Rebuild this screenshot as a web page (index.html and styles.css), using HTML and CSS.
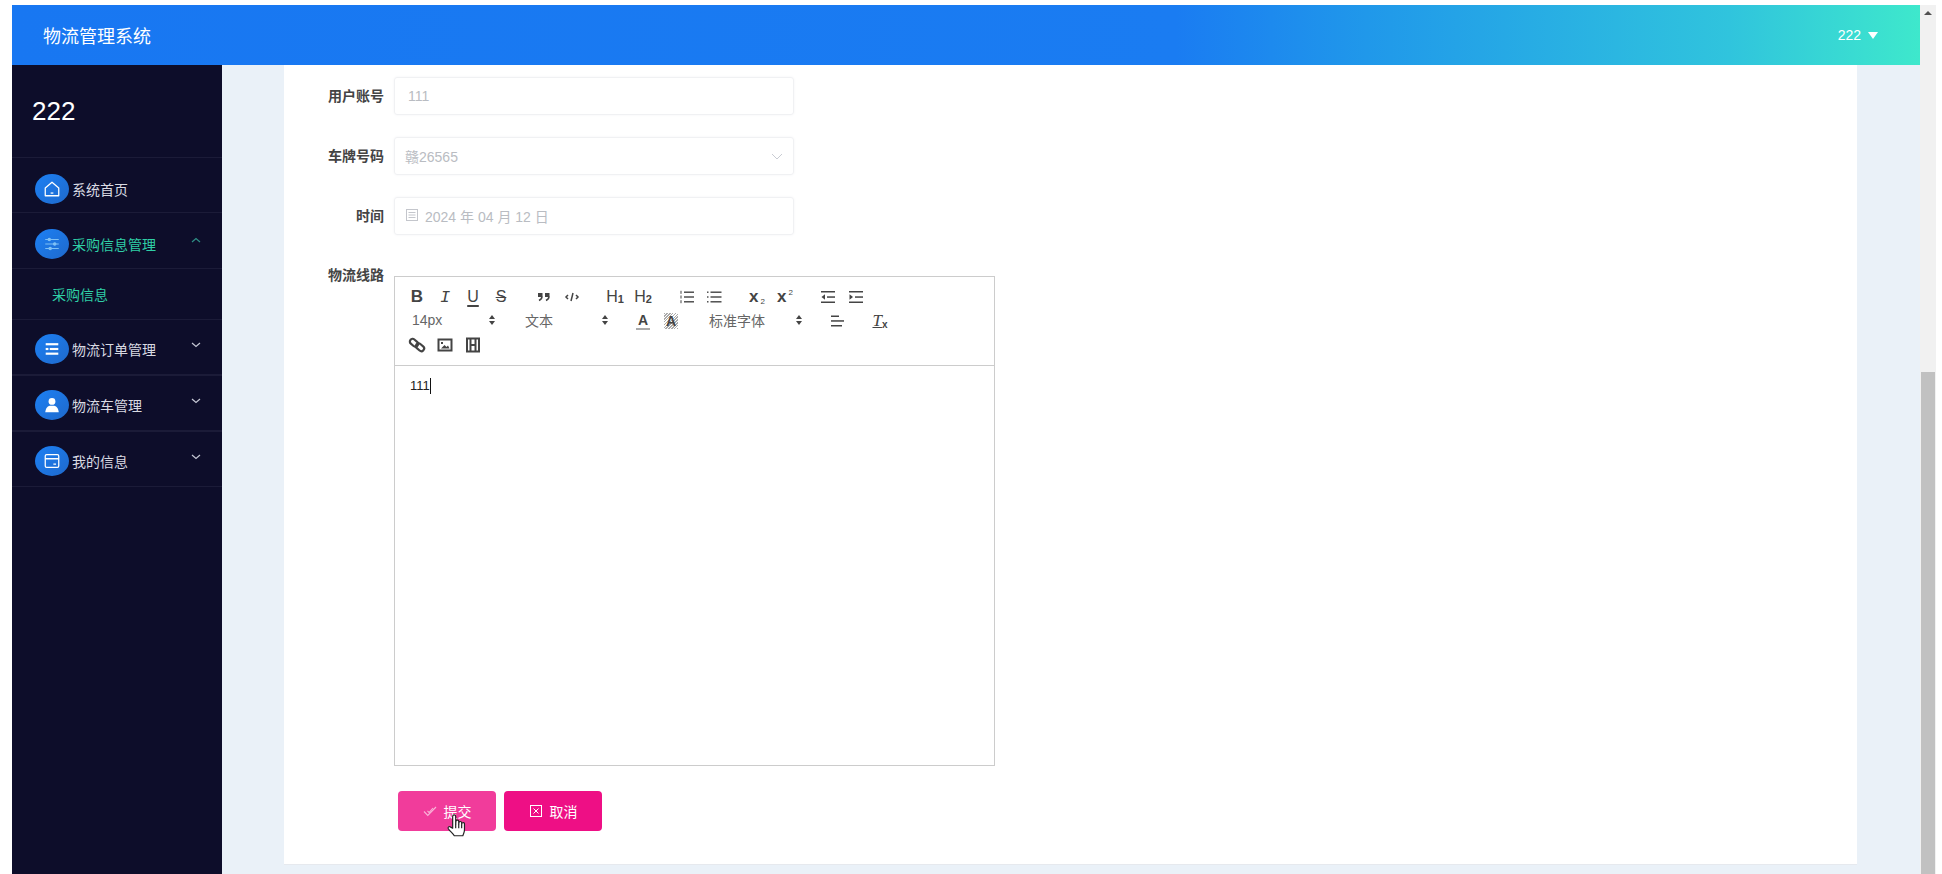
FILE: index.html
```html
<!DOCTYPE html>
<html lang="zh-CN">

<head>
    <meta charset="UTF-8">
    <title>物流管理系统</title>
    <link rel="stylesheet" href="styles.css">
</head>

<body>
    <div class="app">
        <div class="page">
            <header class="topbar">
                <span class="brand">物流管理系统</span>
                <span class="user">222 <i class="user-arrow"></i></span>
            </header>

            <div class="body-row">
                <aside class="sidebar">
                    <div class="side-user">222</div>

                    <div class="menu-item">
                        <span class="menu-icon">
                            <svg viewBox="0 0 20 20" fill="none" stroke="#fff" stroke-width="1.4">
                                <path d="M2.5 9 10 2.5 17.5 9v8.5h-15z" stroke-linejoin="round" />
                                <path d="M8.5 14.5h3" />
                            </svg>
                        </span>
                        <span class="menu-text">系统首页</span>
                    </div>

                    <div class="menu-item active">
                        <span class="menu-icon">
                            <svg viewBox="0 0 20 20" fill="none" stroke="#7fc0f5" stroke-width="1.3">
                                <path d="M2.5 5h15M2.5 10h15M2.5 15h15" />
                                <circle cx="7" cy="5" r="1.3" fill="#7fc0f5" />
                                <circle cx="13" cy="10" r="1.3" fill="#7fc0f5" />
                                <circle cx="8" cy="15" r="1.3" fill="#7fc0f5" />
                            </svg>
                        </span>
                        <span class="menu-text">采购信息管理</span>
                        <svg class="chevron" viewBox="0 0 10 6" fill="none" stroke="#2f8f86" stroke-width="1.2">
                            <path d="M1 5 5 1.5 9 5" />
                        </svg>
                    </div>

                    <div class="submenu-item">采购信息</div>

                    <div class="menu-item">
                        <span class="menu-icon">
                            <svg viewBox="0 0 20 20" fill="#fff">
                                <rect x="3" y="3.5" width="14" height="2.4" />
                                <rect x="3" y="8.8" width="3" height="2.4" />
                                <rect x="7.5" y="8.8" width="9.5" height="2.4" />
                                <rect x="3" y="14" width="14" height="2.4" />
                            </svg>
                        </span>
                        <span class="menu-text">物流订单管理</span>
                        <svg class="chevron" viewBox="0 0 10 6" fill="none" stroke="#c5c7d4" stroke-width="1.2">
                            <path d="M1 1 5 4.5 9 1" />
                        </svg>
                    </div>

                    <div class="menu-item">
                        <span class="menu-icon">
                            <svg viewBox="0 0 20 20" fill="#fff">
                                <circle cx="10" cy="6" r="3.8" />
                                <path d="M2.5 18c.5-5 3-7 5-7.300h5c2 .3 4.500 2.300 5 7.300z" />
                            </svg>
                        </span>
                        <span class="menu-text">物流车管理</span>
                        <svg class="chevron" viewBox="0 0 10 6" fill="none" stroke="#c5c7d4" stroke-width="1.2">
                            <path d="M1 1 5 4.5 9 1" />
                        </svg>
                    </div>

                    <div class="menu-item">
                        <span class="menu-icon">
                            <svg viewBox="0 0 20 20" fill="none" stroke="#fff" stroke-width="1.4">
                                <rect x="2.500" y="3" width="15" height="14" rx="1.500" />
                                <path d="M2.500 7.500h15M11.500 13.500h3" />
                            </svg>
                        </span>
                        <span class="menu-text">我的信息</span>
                        <svg class="chevron" viewBox="0 0 10 6" fill="none" stroke="#c5c7d4" stroke-width="1.2">
                            <path d="M1 1 5 4.5 9 1" />
                        </svg>
                    </div>
                </aside>

                <main class="main">
                    <div class="card">
                        <div class="form-row">
                            <label class="form-label">用户账号</label>
                            <div class="field"><span class="field-text">111</span></div>
                        </div>

                        <div class="form-row">
                            <label class="form-label">车牌号码</label>
                            <div class="field select">
                                <span class="field-text">赣26565</span>
                                <svg class="select-arrow" viewBox="0 0 12 7" fill="none" stroke="#c9ccd3" stroke-width="1">
                                    <path d="M1 1 6 6 11 1" />
                                </svg>
                            </div>
                        </div>

                        <div class="form-row">
                            <label class="form-label">时间</label>
                            <div class="field date">
                                <svg class="date-icon" viewBox="0 0 14 14" fill="none" stroke="#c4c6cc" stroke-width="1">
                                    <rect x="1.500" y="1.500" width="11" height="11" />
                                    <path d="M3.500 4.500h7M3.500 7h7M3.500 9.500h7" />
                                </svg>
                                <span class="field-text">2024 年 04 月 12 日</span>
                            </div>
                        </div>

                        <div class="form-row editor-row">
                            <label class="form-label">物流线路</label>
                            <div class="editor">
                                <div class="toolbar">
                                    <span class="tool-group">
                                        <button class="tool tool-bold">B</button>
                                        <button class="tool tool-italic">I</button>
                                        <button class="tool tool-under">U</button>
                                        <button class="tool tool-strike">S</button>
                                    </span>
                                    <span class="tool-group">
                                        <button class="tool">
                                            <svg viewBox="0 0 18 18" fill="#444" stroke="#444">
                                                <rect x="3.500" y="5.500" width="3.500" height="3" />
                                                <rect x="10.500" y="5.500" width="3.500" height="3" />
                                                <path d="M7 8.500c0 2.500-2 3.500-3 4M14 8.500c0 2.500-2 3.500-3 4" fill="none" stroke-width="1.500" />
                                            </svg>
                                        </button>
                                        <button class="tool">
                                            <svg viewBox="0 0 18 18" fill="none" stroke="#444" stroke-width="1.500">
                                                <path d="M5 7 3 9l2 2M13 7l2 2-2 2M10 5 8 13" />
                                            </svg>
                                        </button>
                                    </span>
                                    <span class="tool-group">
                                        <button class="tool tool-head">H<small>1</small></button>
                                        <button class="tool tool-head">H<small>2</small></button>
                                    </span>
                                    <span class="tool-group">
                                        <button class="tool">
                                            <svg viewBox="0 0 18 18" fill="#444">
                                                <rect x="7" y="3.500" width="10" height="1.400" />
                                                <rect x="7" y="8.300" width="10" height="1.400" />
                                                <rect x="7" y="13.100" width="10" height="1.400" />
                                                <rect x="3.500" y="2.800" width="1" height="3" />
                                                <rect x="3.500" y="7.500" width="1" height="3" />
                                                <rect x="3.500" y="12.200" width="1" height="3" />
                                            </svg>
                                        </button>
                                        <button class="tool">
                                            <svg viewBox="0 0 18 18" fill="#444">
                                                <rect x="5.500" y="3.500" width="11" height="1.400" />
                                                <rect x="5.500" y="8.300" width="11" height="1.400" />
                                                <rect x="5.500" y="13.100" width="11" height="1.400" />
                                                <rect x="2" y="3.500" width="1.500" height="1.400" />
                                                <rect x="2" y="8.300" width="1.500" height="1.400" />
                                                <rect x="2" y="13.100" width="1.500" height="1.400" />
                                            </svg>
                                        </button>
                                    </span>
                                    <span class="tool-group">
                                        <button class="tool tool-script">x<sub>2</sub></button>
                                        <button class="tool tool-script">x<sup>2</sup></button>
                                    </span>
                                    <span class="tool-group">
                                        <button class="tool">
                                            <svg viewBox="0 0 18 18" fill="#444">
                                                <rect x="2" y="3" width="14" height="1.500" />
                                                <rect x="2" y="13.500" width="14" height="1.500" />
                                                <rect x="8" y="8.300" width="8" height="1.500" />
                                                <path d="M6 6.200v5.600L2.500 9z" />
                                            </svg>
                                        </button>
                                        <button class="tool">
                                            <svg viewBox="0 0 18 18" fill="#444">
                                                <rect x="2" y="3" width="14" height="1.500" />
                                                <rect x="2" y="13.500" width="14" height="1.500" />
                                                <rect x="8" y="8.300" width="8" height="1.500" />
                                                <path d="M2.500 6.200v5.600L6 9z" />
                                            </svg>
                                        </button>
                                    </span>

                                    <span class="tool-group">
                                        <span class="picker picker-size">14px<i class="picker-arrow"></i></span>
                                    </span>
                                    <span class="tool-group">
                                        <span class="picker picker-size">文本<i class="picker-arrow"></i></span>
                                    </span>
                                    <span class="tool-group">
                                        <button class="tool tool-color"><span>A</span></button>
                                        <button class="tool tool-bg"><span>A</span></button>
                                    </span>
                                    <span class="tool-group">
                                        <span class="picker picker-font">标准字体<i class="picker-arrow"></i></span>
                                    </span>
                                    <span class="tool-group">
                                        <button class="tool">
                                            <svg viewBox="0 0 18 18" fill="#444">
                                                <rect x="3" y="3.500" width="8" height="1.500" />
                                                <rect x="3" y="8.200" width="13" height="1.500" />
                                                <rect x="3" y="13" width="11" height="1.500" />
                                            </svg>
                                        </button>
                                    </span>
                                    <span class="tool-group">
                                        <button class="tool tool-clean"><span>T</span><small>x</small></button>
                                    </span>

                                    <span class="tool-group">
                                        <button class="tool">
                                            <svg viewBox="0 0 18 18" fill="none" stroke="#444" stroke-width="2.200">
                                                <rect x="1.500" y="4" width="9" height="5.500" rx="2.700" transform="rotate(40 6 6.700)" />
                                                <rect x="7.500" y="8.500" width="9" height="5.500" rx="2.700" transform="rotate(40 12 11.200)" />
                                            </svg>
                                        </button>
                                        <button class="tool">
                                            <svg viewBox="0 0 18 18" fill="none" stroke="#444" stroke-width="2">
                                                <rect x="2.500" y="3.500" width="13" height="11" />
                                                <path d="M5 12.500 8.500 9l2 2 1.500-1.500 1.500 3z" fill="#444" stroke="none" />
                                                <rect x="5" y="6" width="2" height="2" fill="#444" stroke="none" />
                                            </svg>
                                        </button>
                                        <button class="tool">
                                            <svg viewBox="0 0 18 18" fill="none" stroke="#444" stroke-width="2">
                                                <rect x="3" y="2.500" width="12" height="13" />
                                                <path d="M6.500 2.500v13M11.500 2.500v13M6.500 9h5" />
                                            </svg>
                                        </button>
                                    </span>
                                </div>
                                <div class="editor-body">111<i class="caret"></i></div>
                            </div>
                        </div>

                        <div class="actions">
                            <button class="btn btn-submit">
                                <svg class="btn-icon" viewBox="0 0 14 14" fill="none" stroke="#f9b3d8" stroke-width="1.100">
                                    <path d="M1 7.500 4.800 11.500 13 3M4.500 6.800 6 8.500 10 4" />
                                </svg>
                                提交
                                <svg class="hand" viewBox="0 0 20 24" fill="#fff" stroke="#222" stroke-width="1.100" stroke-linejoin="round">
                                    <path d="M6 14V3.200a1.400 1.400 0 0 1 2.800 0V10l.2-2.300a1.300 1.300 0 0 1 2.600.2V10.500l.2-1.800a1.300 1.300 0 0 1 2.500.2v2l.2-1a1.200 1.200 0 0 1 2.400.2v5.400c0 2.500-1 3.500-1.500 5.500H7.500C6.500 19 3.500 17 2 14.500c-.8-1.500.8-2.500 1.800-1.700z" />
                                    <path d="M8.800 10v4M11.600 10.500v3.500M14.300 11v3" fill="none" />
                                </svg>
                            </button>
                            <button class="btn btn-cancel">
                                <svg class="btn-icon" viewBox="0 0 14 14" fill="none" stroke="#fff" stroke-width="1">
                                    <rect x="1.500" y="1.500" width="11" height="11" />
                                    <path d="M4.500 4.500l5 5M9.500 4.500l-5 5" />
                                </svg>
                                取消
                            </button>
                        </div>
                    </div>
                </main>
            </div>
        </div>

        <div class="scrollbar">
            <i class="scroll-up"></i>
            <div class="scroll-thumb"></div>
        </div>
    </div>
</body>

</html>
```

FILE: styles.css
```css
* {
    margin: 0;
    padding: 0;
    box-sizing: border-box;
}

html,
body {
    height: 100%;
    overflow: hidden;
}

body {
    padding: 5px 6px 0 12px;
    background-color: #fff;
    font-family: "Liberation Sans", "Noto Sans CJK SC", sans-serif;
    font-size: 14px;
    color: #444;
}

.app {
    display: flex;
    height: 100%;
}

.page {
    display: flex;
    flex-direction: column;
    flex: 1;
    min-width: 0;
}

/* top bar */
.topbar {
    display: flex;
    align-items: center;
    justify-content: space-between;
    height: 60px;
    padding: 0 42px 0 31px;
    background: linear-gradient(90deg, #1877f2 0%, #1a7cf2 61%, #2098ea 71%, #30c4dd 90%, #3ee8cc 100%);
    color: #fff;
}

.brand {
    font-size: 18px;
}

.user {
    display: flex;
    align-items: center;
    gap: 7px;
    font-size: 14px;
}

.user-arrow {
    width: 0;
    height: 0;
    border-left: 5px solid transparent;
    border-right: 5px solid transparent;
    border-top: 7px solid #fff;
}

.body-row {
    display: flex;
    flex: 1;
    min-height: 0;
}

/* sidebar */
.sidebar {
    width: 210px;
    flex-shrink: 0;
    background-color: #0d0d2a;
    color: #d9dae2;
}

.side-user {
    height: 93px;
    padding: 29px 0 0 20px;
    font-size: 26px;
    line-height: 34px;
    color: #fff;
    border-bottom: 1px solid #1b1b38;
}

.menu-item {
    display: flex;
    align-items: center;
    height: 55px;
    padding: 7px 0 0 23px;
    border-bottom: 1px solid #1b1b38;
}

.menu-item.active {
    height: 56px;
}

.submenu-item + .menu-item,
.submenu-item + .menu-item + .menu-item {
    height: 56px;
    padding-top: 4px;
    border-bottom-width: 2px;
}

.menu-item:last-child {
    padding-top: 4px;
}

.menu-icon {
    display: flex;
    align-items: center;
    justify-content: center;
    width: 34px;
    height: 30px;
    border-radius: 50%;
    background: linear-gradient(135deg, #1c80f4, #1f69cc);
}

.menu-icon svg {
    width: 18px;
    height: 18px;
}

.menu-text {
    margin-left: 3px;
    font-size: 14px;
}

.chevron {
    width: 10px;
    height: 6px;
    margin-left: auto;
    margin-right: 21px;
    margin-bottom: 9px;
}

.active .menu-text,
.submenu-item {
    color: #2fcfa6;
}

.submenu-item {
    height: 51px;
    padding-left: 40px;
    line-height: 52px;
    border-bottom: 1px solid #1b1b38;
}

/* content */
.main {
    flex: 1;
    min-width: 0;
    padding: 0 63px 0 62px;
    background-color: #eaf1f8;
    overflow: hidden;
}

.card {
    height: 800px;
    padding-top: 12px;
    background-color: #fff;
    border-bottom: 1px solid #e6e9ee;
}

.form-row {
    display: flex;
    margin-bottom: 22px;
}

.form-label {
    width: 100px;
    margin-right: 10px;
    text-align: right;
    font-weight: bold;
    line-height: 38px;
    color: #444;
}

.field {
    display: flex;
    align-items: center;
    width: 400px;
    height: 38px;
    padding: 0 13px;
    border: 1px solid #f0f1f3;
    border-radius: 3px;
    box-shadow: 0 0 3px #f3f4f6;
    color: #b9bcc2;
}

.field-text {
    font-size: 14px;
}

.select {
    padding: 0 10px;
    justify-content: space-between;
}

.select-arrow {
    width: 12px;
    height: 7px;
}

.date {
    padding: 0 10px;
    gap: 6px;
}

.date-icon {
    width: 14px;
    height: 14px;
    margin-bottom: 3px;
}

/* editor */
.editor-row {
    margin-top: 32px;
    margin-bottom: 25px;
}

.editor-row .form-label {
    line-height: 16px;
}

.editor {
    width: 601px;
    margin-top: 9px;
    border: 1px solid #ccc;
}

.toolbar {
    display: flex;
    flex-wrap: wrap;
    height: 89px;
    padding: 8px;
    border-bottom: 1px solid #ccc;
    font-size: 14px;
}

.tool-group {
    display: flex;
    margin-right: 15px;
}

.tool {
    display: flex;
    align-items: center;
    justify-content: center;
    width: 28px;
    height: 24px;
    padding: 3px 5px;
    border: none;
    background: none;
    font-family: "Liberation Sans", sans-serif;
    color: #444;
}

.tool svg {
    width: 18px;
    height: 18px;
}

.tool-bold {
    font-size: 17px;
    font-weight: bold;
}

.tool-italic {
    font-family: "Liberation Mono", monospace;
    font-size: 17px;
    font-style: italic;
}

.tool-under {
    font-size: 16px;
    text-decoration: underline;
    text-decoration-thickness: 2px;
    text-underline-offset: 3px;
}

.tool-strike {
    font-size: 16px;
    text-decoration: line-through;
}

.tool-head {
    font-size: 16px;
}

.tool-head small {
    font-size: 11px;
    font-weight: bold;
    margin-top: 4px;
}

.tool-script {
    font-size: 17px;
    font-weight: bold;
}

.tool-script sub,
.tool-script sup {
    margin-left: 2px;
    font-size: 8px;
    font-weight: normal;
}

.tool-script sub {
    align-self: flex-end;
}

.tool-script sup {
    align-self: flex-start;
}

.tool-color span {
    padding: 0 2px;
    font-size: 14px;
    font-weight: bold;
    line-height: 16px;
    border-bottom: 2px solid #aaa;
}

.tool-bg span {
    padding: 0 2px;
    font-size: 14px;
    font-weight: bold;
    background: repeating-linear-gradient(135deg, #aaa 0, #aaa 1px, #fff 1px, #fff 2px);
}

.tool-clean span {
    font-family: "Liberation Serif", serif;
    font-size: 17px;
    font-style: italic;
    text-decoration: underline;
}

.tool-clean small {
    font-size: 10px;
    font-weight: bold;
    margin-top: 6px;
}

.picker {
    display: flex;
    align-items: center;
    justify-content: space-between;
    height: 24px;
    padding: 0 6px 2px 9px;
    color: #666;
}

.picker-size {
    width: 98px;
}

.picker-font {
    width: 108px;
}

.picker-arrow {
    display: flex;
    flex-direction: column;
    gap: 2px;
}

.picker-arrow::before,
.picker-arrow::after {
    content: "";
    width: 0;
    height: 0;
    border-left: 3px solid transparent;
    border-right: 3px solid transparent;
}

.picker-arrow::before {
    border-bottom: 4px solid #444;
}

.picker-arrow::after {
    border-top: 4px solid #444;
}

.editor-body {
    display: flex;
    align-items: flex-start;
    height: 399px;
    padding: 11px 15px;
    font-size: 13px;
    line-height: 18px;
    color: #222;
}

.caret {
    width: 1px;
    height: 16px;
    margin-top: 1px;
    background-color: #111;
}

/* buttons */
.actions {
    display: flex;
    gap: 8px;
    padding-left: 114px;
}

.btn {
    position: relative;
    display: flex;
    align-items: center;
    justify-content: center;
    gap: 7px;
    width: 98px;
    height: 40px;
    border: none;
    border-radius: 4px;
    font-family: inherit;
    font-size: 14px;
    color: #fff;
}

.btn-icon {
    width: 14px;
    height: 14px;
}

.btn-submit {
    background-color: #f13c9b;
}

.btn-cancel {
    background-color: #ee0f85;
}

/* mouse pointer in the shot */
.hand {
    position: absolute;
    left: 48px;
    top: 22px;
    width: 22px;
    height: 26px;
}

/* scrollbar */
.scrollbar {
    display: flex;
    flex-direction: column;
    justify-content: space-between;
    width: 16px;
    padding-top: 6px;
    background-color: #f1f1f1;
}

.scroll-up {
    align-self: center;
    width: 0;
    height: 0;
    border-left: 4px solid transparent;
    border-right: 4px solid transparent;
    border-bottom: 4px solid #505050;
}

.scroll-thumb {
    height: 502px;
    margin: 0 1px;
    background-color: #c1c1c1;
}
```
